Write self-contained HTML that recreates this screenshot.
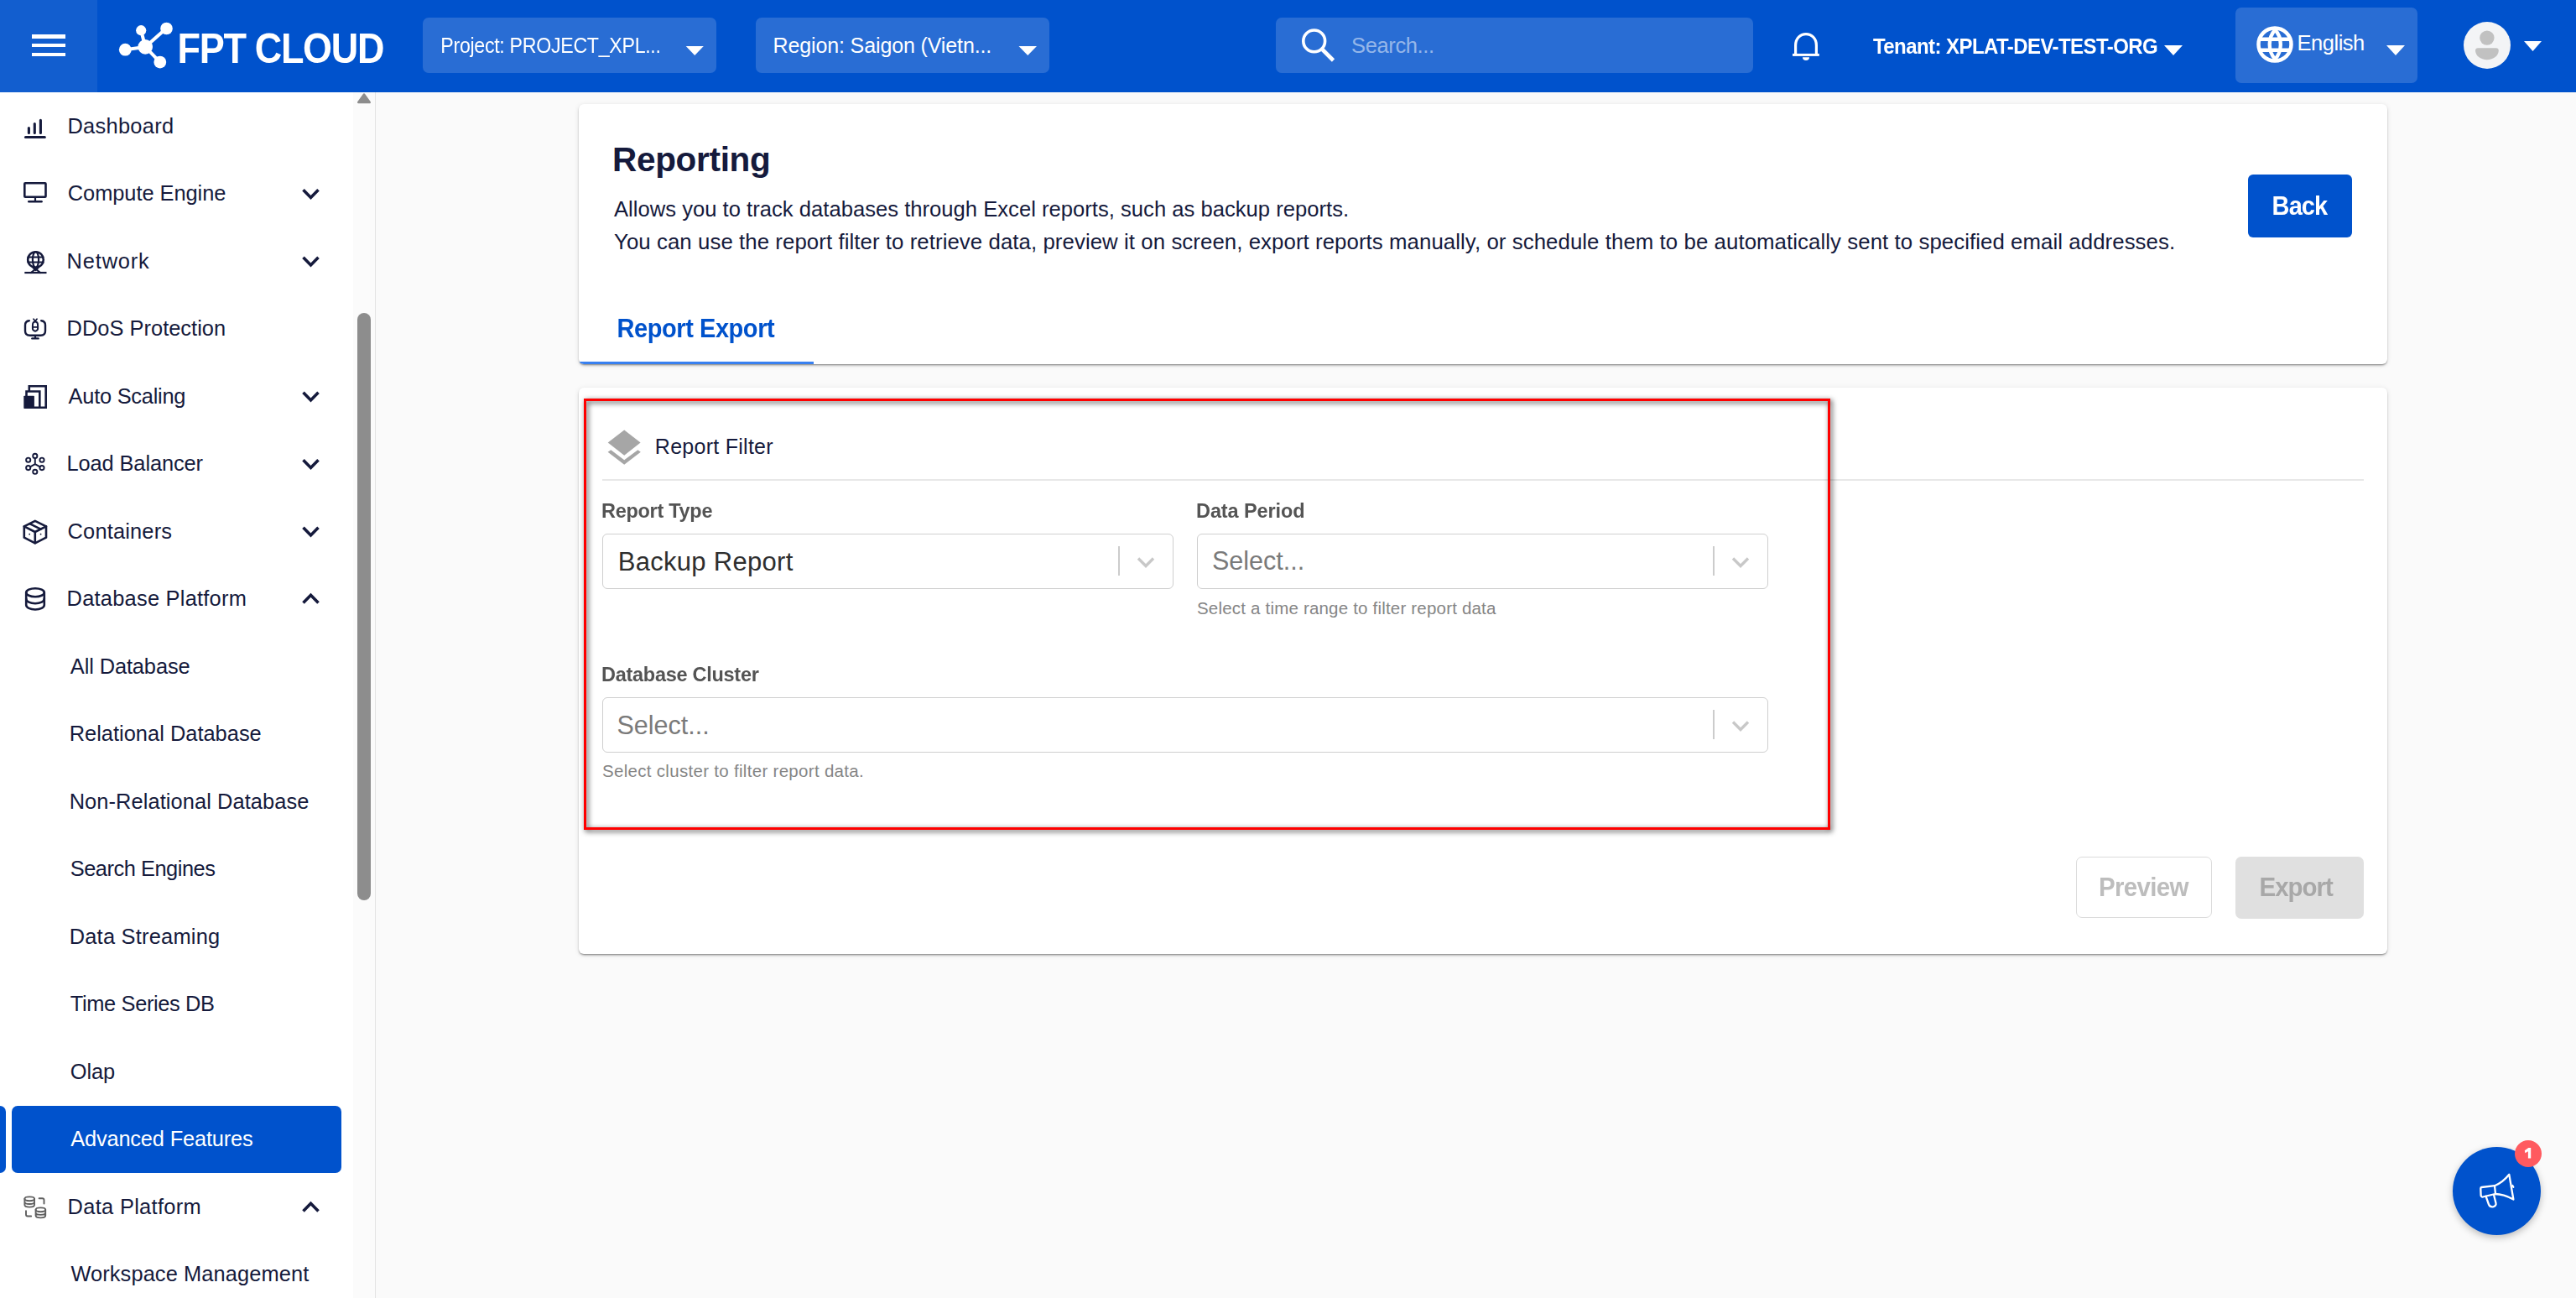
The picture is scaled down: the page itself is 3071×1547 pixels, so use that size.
<!DOCTYPE html>
<html><head><meta charset="utf-8">
<style>
html,body{margin:0;padding:0;}
body{width:3071px;height:1547px;position:relative;overflow:hidden;background:#fafafa;font-family:"Liberation Sans",sans-serif;}
.a{position:absolute;box-sizing:border-box;}
.t{position:absolute;white-space:nowrap;line-height:1;font-family:"Liberation Sans",sans-serif;}
svg{position:absolute;overflow:visible;}
</style></head><body>
<!-- header -->
<div class="a" style="left:0;top:0;width:3071px;height:110px;background:#0052cc;"></div>
<div class="a" style="left:0;top:0;width:116px;height:110px;background:rgba(255,255,255,0.07);"></div>
<div class="a" style="left:38px;top:41px;width:40px;height:4.6px;background:#fff;"></div>
<div class="a" style="left:38px;top:51.8px;width:40px;height:4.6px;background:#fff;"></div>
<div class="a" style="left:38px;top:62.6px;width:40px;height:4.6px;background:#fff;"></div>
<div class="a" style="left:504px;top:21px;width:350px;height:66px;border-radius:7px;background:rgba(255,255,255,0.16);"></div>
<div class="a" style="left:901px;top:21px;width:350px;height:66px;border-radius:7px;background:rgba(255,255,255,0.16);"></div>
<div class="a" style="left:1521px;top:21px;width:569px;height:66px;border-radius:7px;background:rgba(255,255,255,0.16);"></div>
<div class="a" style="left:2665px;top:9px;width:217px;height:90px;border-radius:7px;background:rgba(255,255,255,0.16);"></div>

<!-- sidebar -->
<div class="a" style="left:0;top:110px;width:421px;height:1437px;background:#fff;"></div>
<div class="a" style="left:421px;top:110px;width:26px;height:1437px;background:#fbfbfb;"></div>
<div class="a" style="left:447px;top:110px;width:1px;height:1437px;background:#e3e3e3;"></div>
<div class="a" style="left:426px;top:373px;width:16px;height:700px;border-radius:8px;background:#8d8d8d;"></div>
<div class="a" style="left:14px;top:1318px;width:393px;height:80px;border-radius:7px;background:#0052cc;"></div>
<div class="a" style="left:0;top:1318px;width:7px;height:80px;border-radius:0 7px 7px 0;background:#0052cc;"></div>

<!-- card 1 -->
<div class="a" style="left:690px;top:124px;width:2156px;height:310px;border-radius:6px;background:#fff;overflow:hidden;box-shadow:0 2px 3px -1px rgba(0,0,0,0.42),0 1px 1px 0 rgba(0,0,0,0.10),0 1px 6px 0 rgba(0,0,0,0.10);"><div class="a" style="left:0;top:307px;width:280px;height:3px;background:#3880f0;"></div></div>
<div class="a" style="left:2680px;top:208px;width:124px;height:75px;border-radius:6px;background:#0052cc;"></div>

<!-- card 2 -->
<div class="a" style="left:690px;top:462px;width:2156px;height:675px;border-radius:6px;background:#fff;box-shadow:0 2px 3px -1px rgba(0,0,0,0.42),0 1px 1px 0 rgba(0,0,0,0.10),0 1px 6px 0 rgba(0,0,0,0.10);"></div>
<div class="a" style="left:718px;top:571px;width:2100px;height:2px;background:#e8e8e8;"></div>
<div class="a" style="left:718px;top:636px;width:681px;height:66px;border:1.5px solid #cfcfcf;border-radius:6px;background:#fff;"></div>
<div class="a" style="left:1427px;top:636px;width:681px;height:66px;border:1.5px solid #cfcfcf;border-radius:6px;background:#fff;"></div>
<div class="a" style="left:718px;top:831px;width:1390px;height:66px;border:1.5px solid #cfcfcf;border-radius:6px;background:#fff;"></div>
<div class="a" style="left:1333px;top:651px;width:2px;height:35px;background:#cccccc;"></div>
<div class="a" style="left:2042px;top:651px;width:2px;height:35px;background:#cccccc;"></div>
<div class="a" style="left:2042px;top:846px;width:2px;height:35px;background:#cccccc;"></div>
<div class="a" style="left:2475px;top:1021px;width:162px;height:73px;border:1.5px solid #dcdcdc;border-radius:7px;background:#fff;"></div>
<div class="a" style="left:2665px;top:1021px;width:153px;height:74px;border-radius:7px;background:#e0e0e0;"></div>

<!-- red annotation box -->
<div class="a" style="left:696px;top:475px;width:1486px;height:514px;border:3.2px solid #ff0000;filter:drop-shadow(2px 2px 3px rgba(0,0,0,0.78));"></div>

<!-- FAB -->
<div class="a" style="left:2924px;top:1367px;width:105px;height:105px;border-radius:50%;background:#0052cc;box-shadow:0 3px 8px rgba(0,0,0,0.25);"></div>
<div class="a" style="left:2998px;top:1359px;width:32px;height:32px;border-radius:50%;background:#ff5a5f;"></div>

<svg style="left:0;top:0" width="3071" height="1547" viewBox="0 0 3071 1547">
<!-- logo -->
<g fill="#fff" stroke="#fff">
 <line x1="173.2" y1="55.9" x2="168.2" y2="36.2" stroke-width="4"/>
 <line x1="173.2" y1="55.9" x2="198" y2="34" stroke-width="4"/>
 <line x1="173.2" y1="55.9" x2="149" y2="59.2" stroke-width="4"/>
 <line x1="173.2" y1="55.9" x2="190.8" y2="74.1" stroke-width="4"/>
 <circle cx="173.2" cy="55.9" r="8.8" stroke="none"/>
 <circle cx="168.2" cy="36.2" r="6.1" stroke="none"/>
 <circle cx="198.5" cy="34" r="7.3" stroke="none"/>
 <circle cx="149.3" cy="59.2" r="7.4" stroke="none"/>
 <circle cx="190.8" cy="74.1" r="7.4" stroke="none"/>
</g>
<!-- header arrows -->
<g fill="#fff">
 <polygon points="817.7,54.9 838.8,54.9 828.25,66"/>
 <polygon points="1214.5,54.9 1236,54.9 1225.25,66"/>
 <polygon points="2580,54 2602,54 2591,66"/>
 <polygon points="2845,54 2867,54 2856,66"/>
 <polygon points="3009,49 3030,49 3019.5,61"/>
</g>
<!-- search icon -->
<g fill="none" stroke="#fff">
 <circle cx="1566.7" cy="48.9" r="12.9" stroke-width="3.6"/>
 <line x1="1576.5" y1="59" x2="1589.5" y2="72" stroke-width="4.6"/>
</g>
<!-- bell -->
<g fill="none" stroke="#fff" stroke-width="3.2" stroke-linejoin="round">
 <path d="M2140.6,64.5 L2140.6,54 C2140.6,45.5 2146.5,40.6 2153,40.6 C2159.5,40.6 2165.4,45.5 2165.4,54 L2165.4,64.5"/>
 <line x1="2137" y1="65.4" x2="2168.8" y2="65.4" stroke-width="3"/>
</g>
<path d="M2149,68.2 L2157,68.2 A4,3.8 0 0 1 2149,68.2 Z" fill="#fff"/>
<!-- globe -->
<g fill="none" stroke="#fff" stroke-width="4.5">
 <circle cx="2712" cy="53" r="19.5"/>
 <path d="M2712.3,35.5 C2703.5,45 2703.5,61 2712.3,70.5 C2721,61 2721,45 2712.3,35.5 Z" stroke-width="4.3" stroke-linejoin="miter"/>
 <line x1="2693" y1="46.8" x2="2731" y2="46.8" stroke-width="4.5"/>
 <line x1="2693" y1="59.8" x2="2731" y2="59.8" stroke-width="4.4"/>
</g>
<!-- avatar -->
<circle cx="2965" cy="54" r="28" fill="#f3f4f6"/>
<circle cx="2964.9" cy="45.1" r="8.7" fill="#c1c1c1"/>
<path d="M2951,60 C2951,58.3 2952.3,57.2 2954,57.2 L2975.8,57.2 C2977.5,57.2 2978.8,58.3 2978.8,60 C2978.8,66.5 2972.5,71.2 2964.9,71.2 C2957.3,71.2 2951,66.5 2951,60 Z" fill="#c1c1c1"/>

<!-- sidebar scroll up -->
<polygon points="434,112.5 440.8,122 427.2,122" fill="#8d8d8d" stroke="#8d8d8d" stroke-width="2.4" stroke-linejoin="round"/>

<!-- sidebar icons -->
<g fill="none" stroke="#151a3c" stroke-width="3.1" stroke-linecap="round" stroke-linejoin="round">
 <!-- dashboard -->
 <line x1="34.4" y1="152.6" x2="34.4" y2="158.4"/>
 <line x1="41.3" y1="147.6" x2="41.3" y2="158.4"/>
 <line x1="48.4" y1="143.4" x2="48.4" y2="158.4"/>
 <line x1="30.5" y1="163.5" x2="53.3" y2="163.5"/>
 <!-- monitor -->
 <rect x="29.3" y="218.3" width="25.2" height="16.5" rx="0.8" stroke-width="2.6"/>
 <line x1="42" y1="235" x2="42" y2="239" stroke-width="2.2"/>
 <line x1="34.2" y1="240.2" x2="49.6" y2="240.2" stroke-width="2.4"/>
 <!-- network -->
 <circle cx="42.5" cy="309.5" r="9.3" stroke-width="2.6"/>
 <ellipse cx="42.5" cy="309.5" rx="3.6" ry="9.3" stroke-width="2.2"/>
 <line x1="33.5" y1="306.5" x2="51.5" y2="306.5" stroke-width="2.2"/>
 <line x1="33.5" y1="312.5" x2="51.5" y2="312.5" stroke-width="2.2"/>
 <path d="M39.5,319 L42.5,322 L45.5,319" stroke-width="2.2"/>
 <line x1="29.3" y1="325" x2="55.5" y2="325" stroke-width="2.2" stroke-linecap="butt"/>
 <path d="M37,325 L42.5,320.5 L48,325" stroke-width="2.2"/>
 <!-- ddos -->
 <path d="M34.8,382.2 C31.5,382.5 30,384.5 30,387.5 L30,394.5 C30,398 32,399.8 35.5,399.8 L48.5,399.8 C52,399.8 54,398 54,394.5 L54,387.5 C54,384.5 52.5,382.5 49.2,382.2" stroke-width="2.4"/>
 <line x1="42" y1="400" x2="42" y2="403" stroke-width="2.2"/>
 <line x1="38.4" y1="403.4" x2="45.6" y2="403.4" stroke-width="2.4"/>
 <path d="M42,383.6 C39.6,383.6 38.9,385.8 38.9,388 L38.9,391.5 C38.9,393.2 40,394.2 42,394.8 C44,394.2 45.1,393.2 45.1,391.5 L45.1,388 C45.1,385.8 44.4,383.6 42,383.6 Z" stroke-width="2"/>
 <path d="M40,380.3 L42,382.8 L44,380.3" stroke-width="1.8"/>
 <line x1="39" y1="389.9" x2="45" y2="389.9" stroke-width="1.6"/>
 <!-- auto scaling -->
 <path d="M34.8,466 L34.8,460.3 L54.7,460.3 L54.7,485.7 L40,485.7" stroke-width="2.6" stroke-linecap="butt" stroke-linejoin="miter"/>
 <path d="M31.5,472 L31.5,466.5 L47.3,466.5 L47.3,485.7" stroke-width="2.6" stroke-linecap="butt" stroke-linejoin="miter"/>
 <rect x="28.3" y="471.8" width="12.6" height="15.2" rx="0.8" fill="#151a3c" stroke="none"/>
 <!-- load balancer -->
 <g stroke-width="1.9">
  <circle cx="41.8" cy="543.4" r="2.6"/>
  <circle cx="33.7" cy="548.2" r="2.6"/>
  <circle cx="50" cy="548.2" r="2.6"/>
  <circle cx="33.7" cy="557.6" r="2.6"/>
  <circle cx="50" cy="557.6" r="2.6"/>
  <circle cx="41.8" cy="562.3" r="2.6"/>
  <path d="M41.8,546 L41.8,553.2 L36,556.4 M41.8,553.2 L47.7,556.4"/>
 </g>
 <!-- containers -->
 <path d="M41.8,620.8 L55,627.4 L55,640.7 L41.8,647.3 L28.8,640.7 L28.8,627.4 Z" stroke-width="2.6"/>
 <path d="M28.8,627.4 L41.8,634 L55,627.4 M41.8,634 L41.8,647.3" stroke-width="2.6"/>
 <path d="M35.3,624.2 L48.5,630.7" stroke-width="2.4"/>
 <circle cx="35.2" cy="636.7" r="0.9" fill="#151a3c" stroke="none"/>
 <circle cx="48.6" cy="636.7" r="0.9" fill="#151a3c" stroke="none"/>
 <!-- database -->
 <ellipse cx="42" cy="706.2" rx="10.8" ry="5" stroke-width="2.6"/>
 <path d="M31.2,706.2 L31.2,721 C31.2,724 36,726.5 42,726.5 C48,726.5 52.8,724 52.8,721 L52.8,706.2" stroke-width="2.6"/>
 <path d="M31.2,713.8 C31.2,716.8 36,719.2 42,719.2 C48,719.2 52.8,716.8 52.8,713.8" stroke-width="2.6"/>
</g>
<!-- data platform icon (gray) -->
<g fill="none" stroke="#5f5f5f" stroke-width="1.9" stroke-linecap="round">
 <ellipse cx="35.2" cy="1428.8" rx="5.8" ry="2.4"/>
 <path d="M29.4,1428.8 L29.4,1436 C29.4,1437.5 32,1438.6 35.2,1438.6 C38.4,1438.6 41,1437.5 41,1436 L41,1428.8 M29.4,1432.5 C29.4,1434 32,1435 35.2,1435 C38.4,1435 41,1434 41,1432.5"/>
 <ellipse cx="48.4" cy="1441.8" rx="5.8" ry="2.4"/>
 <path d="M42.6,1441.8 L42.6,1448.8 C42.6,1450.3 45.2,1451.4 48.4,1451.4 C51.6,1451.4 54.2,1450.3 54.2,1448.8 L54.2,1441.8 M42.6,1445.3 C42.6,1446.8 45.2,1447.9 48.4,1447.9 C51.6,1447.9 54.2,1446.8 54.2,1445.3"/>
 <path d="M46.6,1428.2 L50.5,1428.2 Q52.5,1428.2 52.5,1430.2 L52.5,1434.5"/>
 <path d="M31,1443.3 L31,1447.5 Q31,1449.5 33,1449.5 L37.2,1449.5"/>
</g>
<!-- chevrons -->
<g fill="none" stroke="#151a3c" stroke-width="3.6" stroke-linecap="butt" stroke-linejoin="miter">
 <path d="M361.5,226.3 L370.5,235.5 L379.5,226.3"/>
 <path d="M361.5,306.8 L370.5,316 L379.5,306.8"/>
 <path d="M361.5,467.8 L370.5,477 L379.5,467.8"/>
 <path d="M361.5,548.3 L370.5,557.5 L379.5,548.3"/>
 <path d="M361.5,628.8 L370.5,638 L379.5,628.8"/>
 <path d="M361.5,718.5 L370.5,709.3 L379.5,718.5"/>
 <path d="M361.5,1443.5 L370.5,1434.3 L379.5,1443.5"/>
</g>
<!-- layers icon -->
<g fill="#a6a6a6">
 <polygon points="744.2,512.5 763.6,527.4 744.2,542.7 724.7,527.4"/>
 <polygon points="728.3,536.2 744.2,548.2 760.4,536.2 763.8,538.8 744.2,553.8 724.6,538.8"/>
</g>
<!-- select chevrons -->
<g fill="none" stroke="#c8c8c8" stroke-width="3.4">
 <path d="M1357,665.5 L1366,674.5 L1375,665.5"/>
 <path d="M2066,665.5 L2075,674.5 L2084,665.5"/>
 <path d="M2066,860.5 L2075,869.5 L2084,860.5"/>
</g>
<!-- megaphone -->
<g fill="none" stroke="#fff" stroke-width="2.3" stroke-linejoin="round" stroke-linecap="round">
 <path d="M2958.5,1415 L2974,1413.2 C2981,1410.5 2986,1406.5 2991.3,1399.8 L2996.4,1429.5 C2990,1426 2982,1423 2974.5,1423 L2960,1426.5 C2958.5,1426.8 2957.6,1425.5 2957.6,1424.5 L2957.3,1416.5 C2957.3,1415.8 2957.8,1415.1 2958.5,1415 Z"/>
 <line x1="2974" y1="1413.5" x2="2975" y2="1423"/>
 <path d="M2963.6,1425.8 L2967,1435.5 C2968,1438 2970.5,1438.5 2972,1438.3 C2974.5,1438 2976,1436 2975.5,1434 L2973,1424"/>
 <line x1="2995.3" y1="1413" x2="2996.3" y2="1414.8"/>
</g>
<path d="M3009.8,1371.2 L3014.3,1368 L3017.2,1368 L3017.2,1380.4 L3013.9,1380.4 L3013.9,1372.3 L3010.4,1374.2 Z" fill="#fff"/>
</svg>

<div class="t" style="left:211.50px;top:37.21px;font-size:45px;font-weight:700;color:#fff;letter-spacing:-1.310px;transform:scaleY(1.13);transform-origin:0 38.1px;">FPT CLOUD</div>
<div class="t" style="left:525.30px;top:43.56px;font-size:23.2px;font-weight:400;color:#fff;letter-spacing:-0.303px;transform:scaleY(1.08);transform-origin:0 19.64px;">Project: PROJECT_XPL...</div>
<div class="t" style="left:921.50px;top:42.04px;font-size:25px;font-weight:400;color:#fff;letter-spacing:-0.124px;">Region: Saigon (Vietn...</div>
<div class="t" style="left:1611.00px;top:42.41px;font-size:25.5px;font-weight:400;color:rgba(255,255,255,0.5);letter-spacing:-0.371px;">Search...</div>
<div class="t" style="left:2233.00px;top:43.58px;font-size:24px;font-weight:700;color:#fff;letter-spacing:-0.565px;transform:scaleY(1.08);transform-origin:0 20.32px;">Tenant: XPLAT-DEV-TEST-ORG</div>
<div class="t" style="left:2738.60px;top:38.61px;font-size:25.5px;font-weight:400;color:#fff;letter-spacing:-0.492px;">English</div>
<div class="t" style="left:80.50px;top:137.60px;font-size:25.4px;font-weight:400;color:#151a3c;letter-spacing:0.288px;">Dashboard</div>
<div class="t" style="left:80.80px;top:218.10px;font-size:25.4px;font-weight:400;color:#151a3c;letter-spacing:-0.040px;">Compute Engine</div>
<div class="t" style="left:79.60px;top:298.60px;font-size:25.4px;font-weight:400;color:#151a3c;letter-spacing:0.846px;">Network</div>
<div class="t" style="left:79.60px;top:379.10px;font-size:25.4px;font-weight:400;color:#151a3c;letter-spacing:0.030px;">DDoS Protection</div>
<div class="t" style="left:81.60px;top:459.60px;font-size:25.4px;font-weight:400;color:#151a3c;letter-spacing:-0.249px;">Auto Scaling</div>
<div class="t" style="left:79.60px;top:540.10px;font-size:25.4px;font-weight:400;color:#151a3c;letter-spacing:-0.116px;">Load Balancer</div>
<div class="t" style="left:80.60px;top:620.60px;font-size:25.4px;font-weight:400;color:#151a3c;letter-spacing:0.179px;">Containers</div>
<div class="t" style="left:79.60px;top:701.10px;font-size:25.4px;font-weight:400;color:#151a3c;letter-spacing:0.248px;">Database Platform</div>
<div class="t" style="left:83.80px;top:781.60px;font-size:25.4px;font-weight:400;color:#151a3c;letter-spacing:-0.104px;">All Database</div>
<div class="t" style="left:82.70px;top:862.10px;font-size:25.4px;font-weight:400;color:#151a3c;letter-spacing:0.020px;">Relational Database</div>
<div class="t" style="left:82.70px;top:942.60px;font-size:25.4px;font-weight:400;color:#151a3c;letter-spacing:0.092px;">Non-Relational Database</div>
<div class="t" style="left:83.70px;top:1023.10px;font-size:25.4px;font-weight:400;color:#151a3c;letter-spacing:-0.459px;">Search Engines</div>
<div class="t" style="left:82.70px;top:1103.60px;font-size:25.4px;font-weight:400;color:#151a3c;letter-spacing:0.232px;">Data Streaming</div>
<div class="t" style="left:83.80px;top:1184.10px;font-size:25.4px;font-weight:400;color:#151a3c;letter-spacing:-0.353px;">Time Series DB</div>
<div class="t" style="left:83.70px;top:1264.60px;font-size:25.4px;font-weight:400;color:#151a3c;letter-spacing:-0.037px;">Olap</div>
<div class="t" style="left:84.20px;top:1345.10px;font-size:25.4px;font-weight:400;color:#fff;letter-spacing:-0.168px;">Advanced Features</div>
<div class="t" style="left:80.60px;top:1425.60px;font-size:25.4px;font-weight:400;color:#151a3c;letter-spacing:0.319px;">Data Platform</div>
<div class="t" style="left:84.40px;top:1506.10px;font-size:25.4px;font-weight:400;color:#151a3c;letter-spacing:0.109px;">Workspace Management</div>
<div class="t" style="left:730.00px;top:170.42px;font-size:40.5px;font-weight:700;color:#151a3c;letter-spacing:-0.311px;">Reporting</div>
<div class="t" style="left:732.00px;top:237.03px;font-size:25.6px;font-weight:400;color:#151a3c;letter-spacing:0.016px;">Allows you to track databases through Excel reports, such as backup reports.</div>
<div class="t" style="left:732.00px;top:275.86px;font-size:25.8px;font-weight:400;color:#151a3c;letter-spacing:0.069px;">You can use the report filter to retrieve data, preview it on screen, export reports manually, or schedule them to be automatically sent to specified email addresses.</div>
<div class="t" style="left:2708.60px;top:231.65px;font-size:29px;font-weight:700;color:#fff;letter-spacing:-0.900px;transform:scaleY(1.07);transform-origin:0 24.55px;">Back</div>
<div class="t" style="left:735.50px;top:378.05px;font-size:29px;font-weight:700;color:#0052cc;letter-spacing:-0.432px;transform:scaleY(1.07);transform-origin:0 24.55px;">Report Export</div>
<div class="t" style="left:780.80px;top:519.84px;font-size:25px;font-weight:400;color:#151a3c;letter-spacing:0.274px;">Report Filter</div>
<div class="t" style="left:717.00px;top:597.61px;font-size:23.5px;font-weight:700;color:#545454;letter-spacing:-0.288px;transform:scaleY(1.05);transform-origin:0 19.89px;">Report Type</div>
<div class="t" style="left:1426.00px;top:597.61px;font-size:23.5px;font-weight:700;color:#545454;letter-spacing:-0.094px;transform:scaleY(1.05);transform-origin:0 19.89px;">Data Period</div>
<div class="t" style="left:736.70px;top:653.76px;font-size:31px;font-weight:400;color:#2e2e2e;letter-spacing:0.296px;">Backup Report</div>
<div class="t" style="left:1445.00px;top:653.48px;font-size:30.5px;font-weight:400;color:#7a7a7a;letter-spacing:0.010px;">Select...</div>
<div class="t" style="left:1427.00px;top:714.65px;font-size:20.5px;font-weight:400;color:#858585;letter-spacing:0.193px;">Select a time range to filter report data</div>
<div class="t" style="left:717.00px;top:792.61px;font-size:23.5px;font-weight:700;color:#545454;letter-spacing:-0.277px;transform:scaleY(1.05);transform-origin:0 19.89px;">Database Cluster</div>
<div class="t" style="left:735.40px;top:848.58px;font-size:30.5px;font-weight:400;color:#7a7a7a;letter-spacing:0.010px;">Select...</div>
<div class="t" style="left:718.00px;top:908.65px;font-size:20.5px;font-weight:400;color:#858585;letter-spacing:0.303px;">Select cluster to filter report data.</div>
<div class="t" style="left:2502.00px;top:1042.93px;font-size:29.5px;font-weight:700;color:#bdbdbd;letter-spacing:-0.662px;transform:scaleY(1.05);transform-origin:0 24.97px;">Preview</div>
<div class="t" style="left:2693.60px;top:1042.93px;font-size:29.5px;font-weight:700;color:#a8a8a8;letter-spacing:-1.041px;transform:scaleY(1.05);transform-origin:0 24.97px;">Export</div>
</body></html>
